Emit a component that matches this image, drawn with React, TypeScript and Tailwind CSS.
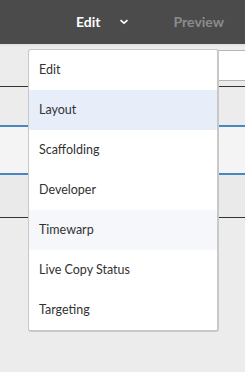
const items = [
  { label: "Edit", bg: "" },
  { label: "Layout", bg: "bg-[#e7eef9]" },
  { label: "Scaffolding", bg: "" },
  { label: "Developer", bg: "" },
  { label: "Timewarp", bg: "bg-[#f6f7fb]" },
  { label: "Live Copy Status", bg: "" },
  { label: "Targeting", bg: "" },
];

export default function App() {
  return (
    <div className="relative h-[372px] w-[245px] overflow-hidden bg-[#ececec] font-['Lato',sans-serif]">
      {/* top bar */}
      <div className="flex h-[44px] items-center bg-[#4b4b4b] pl-[76px] pb-[1px]">
        <span className="text-[14px] font-bold text-white">Edit</span>
        <svg className="ml-[18px] mt-[1px]" width="10" height="6" viewBox="0 0 10 6">
          <path d="M1.5 1.2 L5 4.2 L8.5 1.2" fill="none" stroke="#ffffff" strokeWidth="1.6" />
        </svg>
        <span className="ml-[45px] text-[14px] font-bold text-[#8c8c8c]">Preview</span>
      </div>

      {/* page behind the menu */}
      <div className="h-[2px] bg-[#e2e2e2]" />
      <div className="h-[4px]" />
      <div className="ml-[200px] h-[31px] border-y border-[#b5b5b5] bg-white" />
      <div className="h-[5px]" />
      <div className="h-px bg-[#333333]" />
      <div className="h-[38px]" />
      <div className="h-[2px] bg-[#4a86c1]" />
      <div className="h-[46px] bg-[#f4f4f4]" />
      <div className="h-[2px] bg-[#4a86c1]" />
      <div className="h-[42px] bg-[#eaeaea]" />
      <div className="h-px bg-[#333333]" />

      {/* dropdown */}
      <div className="absolute left-[28px] top-[49px] w-[191px] overflow-hidden rounded-[3px] border border-r-2 border-b-2 border-[#c8c8c8] bg-white">
        {items.map((item) => (
          <div
            key={item.label}
            className={`flex h-[40px] items-center pl-[10px] pt-[1px] text-[12.5px] text-[#323232] ${item.bg}`}
          >
            {item.label}
          </div>
        ))}
      </div>
    </div>
  );
}
